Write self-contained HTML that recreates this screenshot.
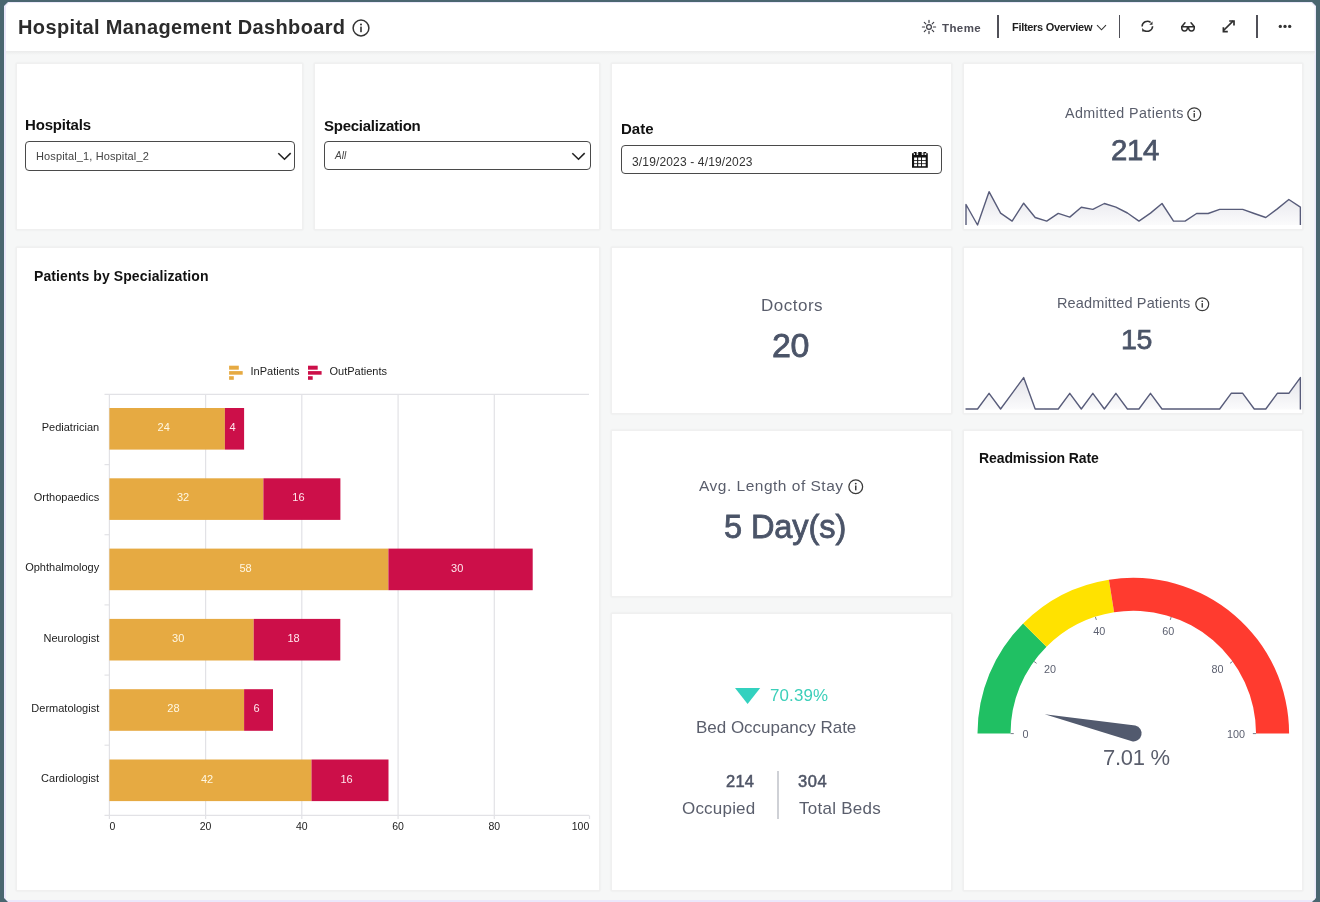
<!DOCTYPE html>
<html><head><meta charset="utf-8">
<style>
*{box-sizing:border-box;margin:0;padding:0}
html,body{width:1320px;height:902px;overflow:hidden;background:#4a6670;font-family:"Liberation Sans",sans-serif;position:relative}
#win{position:absolute;left:4px;top:2px;width:1312px;height:900px;background:#ebe8fb;clip-path:polygon(4px 0,calc(100% - 4px) 0,100% 4px,100% calc(100% - 4px),calc(100% - 4px) 100%,4px 100%,0 calc(100% - 4px),0 4px)}
#bg{position:absolute;left:5.5px;top:3px;width:1309px;height:897px;background:#f6f7f7;clip-path:polygon(3.5px 0,calc(100% - 3.5px) 0,100% 3.5px,100% 100%,0 100%,0 3.5px)}
#hdr{position:absolute;left:5.5px;top:3px;width:1309px;height:48px;background:#fff;clip-path:polygon(3.5px 0,calc(100% - 3.5px) 0,100% 3.5px,100% 100%,0 100%,0 3.5px)}
#hdrline{position:absolute;left:5.5px;top:51px;width:1309px;height:4px;background:linear-gradient(#ebebeb,#f0f1f1 50%,#f6f7f7)}
.card{position:absolute;background:#fff;border:1px solid #f0f0f0;box-shadow:0 0 2px rgba(0,0,0,0.07)}
.t{position:absolute;white-space:nowrap;line-height:1;will-change:transform}
svg{position:absolute;overflow:visible;will-change:transform}
</style></head>
<body>
<div id="win"></div>
<div id="bg"></div>
<div id="hdr"></div>
<div id="hdrline"></div>

<!-- cards -->
<div class="card" style="left:16px;top:63px;width:287px;height:167px"></div>
<div class="card" style="left:314px;top:63px;width:286px;height:167px"></div>
<div class="card" style="left:611px;top:63px;width:341px;height:167px"></div>
<div class="card" style="left:963px;top:63px;width:340px;height:167px"></div>
<div class="card" style="left:16px;top:247px;width:584px;height:644px"></div>
<div class="card" style="left:611px;top:247px;width:341px;height:167px"></div>
<div class="card" style="left:963px;top:247px;width:340px;height:167px"></div>
<div class="card" style="left:611px;top:430px;width:341px;height:167px"></div>
<div class="card" style="left:611px;top:613px;width:341px;height:278px"></div>
<div class="card" style="left:963px;top:430px;width:340px;height:461px"></div>

<!-- header -->
<div class="t" style="left:18px;top:17px;font-size:20px;font-weight:700;color:#2b2b2b;letter-spacing:0.37px">Hospital Management Dashboard</div>
<svg style="left:352px;top:19px" width="18" height="18" viewBox="0 0 18 18"><circle cx="9" cy="9" r="7.9" fill="none" stroke="#333" stroke-width="1.5"/><rect x="8.2" y="7.6" width="1.6" height="5.6" fill="#333"/><circle cx="9" cy="5.4" r="1" fill="#333"/></svg>
<svg style="left:921.5px;top:19.6px" width="14" height="14" viewBox="0 0 14 14"><g stroke="#3d3d45" stroke-width="1.2" fill="none" stroke-linecap="round"><circle cx="7" cy="7" r="2.4"/><path d="M7 0.4V2.6M7 11.4V13.6M0.4 7H2.6M11.4 7H13.6M2.3 2.3L3.8 3.8M10.2 10.2L11.7 11.7M2.3 11.7L3.8 10.2M10.2 3.8L11.7 2.3"/></g></svg>
<div class="t" style="left:942px;top:22.8px;font-size:11.5px;font-weight:700;color:#4d4d57;letter-spacing:0.4px">Theme</div>
<div style="position:absolute;left:997px;top:15px;width:1.6px;height:22.6px;background:#505058"></div>
<div class="t" style="left:1011.5px;top:21.6px;font-size:11px;font-weight:700;color:#1e1e1e;letter-spacing:-0.3px">Filters Overview</div>
<svg style="left:1096px;top:24px" width="11" height="7" viewBox="0 0 11 7"><path d="M1 1.2L5.5 5.8L10 1.2" fill="none" stroke="#333" stroke-width="1.1"/></svg>
<div style="position:absolute;left:1118.6px;top:15px;width:1.8px;height:22.6px;background:#505058"></div>
<svg style="left:1138px;top:17px" width="20" height="18" viewBox="0 0 20 18"><g fill="none" stroke="#2e2e2e" stroke-width="1.5"><path d="M4.1 9.4A5.3 5.3 0 0 1 12.6 5.3"/><path d="M14.6 9.2A5.3 5.3 0 0 1 6.2 13.3"/></g><path d="M11.3 7.7H14.5V4.4Z" fill="#2e2e2e"/><path d="M4.2 11.1V14.4H7.5Z" fill="#2e2e2e"/></svg>
<svg style="left:1180px;top:20.5px" width="16" height="12" viewBox="0 0 16 12"><g fill="none" stroke="#2e2e2e" stroke-width="1.5" stroke-linejoin="round" stroke-linecap="round"><path d="M1.7 5.8H7.5C7.5 8.6 6.1 10.1 4.5 10.1C2.7 10.1 1.5 8.7 1.7 5.8Z"/><path d="M14.3 5.8H8.5C8.5 8.6 9.9 10.1 11.5 10.1C13.3 10.1 14.5 8.7 14.3 5.8Z"/><path d="M1.8 5.6L5 1.8M14.2 5.6L11 1.8"/></g></svg>
<svg style="left:1219px;top:17px" width="20" height="18" viewBox="0 0 20 18"><g fill="none" stroke="#2e2e2e" stroke-width="1.7"><path d="M4.5 13.5L14.2 3.8"/><path d="M10.2 4H15V8.4"/><path d="M4.4 10.2V14.6H8.8"/></g></svg>
<div style="position:absolute;left:1256px;top:15px;width:1.8px;height:22.8px;background:#505058"></div>
<svg style="left:1278px;top:24px" width="14" height="5" viewBox="0 0 14 5"><g fill="#333"><circle cx="2.3" cy="2.4" r="1.65"/><circle cx="7" cy="2.4" r="1.65"/><circle cx="11.7" cy="2.4" r="1.65"/></g></svg>


<!-- filters -->
<div class="t" style="left:24.8px;top:117.3px;font-size:15px;font-weight:700;color:#111;letter-spacing:-0.18px">Hospitals</div>
<div style="position:absolute;left:25px;top:141px;width:270px;height:29.5px;border:1.2px solid #4a4a4a;border-radius:4px;background:#fff"></div>
<div class="t" style="left:35.5px;top:151px;font-size:11px;color:#444;letter-spacing:0.13px">Hospital_1, Hospital_2</div>
<svg style="left:277px;top:152px" width="15" height="9" viewBox="0 0 15 9"><path d="M1.3 1.2L7.5 7.2L13.7 1.1" fill="none" stroke="#222" stroke-width="1.6"/></svg>

<div class="t" style="left:324px;top:117.5px;font-size:15px;font-weight:700;color:#111;letter-spacing:-0.25px">Specialization</div>
<div style="position:absolute;left:324.3px;top:141px;width:266.5px;height:29px;border:1.2px solid #4a4a4a;border-radius:4px;background:#fff"></div>
<div class="t" style="left:334.5px;top:151px;font-size:10px;font-style:italic;color:#444">All</div>
<svg style="left:571px;top:152px" width="15" height="9" viewBox="0 0 15 9"><path d="M1.3 1.2L7.5 7.2L13.7 1.1" fill="none" stroke="#222" stroke-width="1.6"/></svg>

<div class="t" style="left:621px;top:120.6px;font-size:15px;font-weight:700;color:#111;letter-spacing:0px">Date</div>
<div style="position:absolute;left:621px;top:144.8px;width:321.3px;height:29.6px;border:1.2px solid #4a4a4a;border-radius:4px;background:#fff"></div>
<div class="t" style="left:631.5px;top:155.5px;font-size:12px;color:#333;letter-spacing:0.15px">3/19/2023 - 4/19/2023</div>
<svg style="left:912px;top:152px" width="16" height="16" viewBox="0 0 16 16"><path d="M0 1.3H1.8V0H4.6V1.3H6.2V0H9.7V1.3H11.4V0H14.2V1.3H15.8V15.7H0Z" fill="#111"/><g fill="#fff"><rect x="2.1" y="5.5" width="3" height="2.5"/><rect x="6.2" y="5.5" width="2.9" height="2.5"/><rect x="10" y="5.5" width="3.7" height="2.5"/><rect x="2.1" y="8.8" width="3" height="2.5"/><rect x="6.2" y="8.8" width="2.9" height="2.5"/><rect x="10" y="8.8" width="3.7" height="2.5"/><rect x="2.1" y="12.1" width="3" height="2.1"/><rect x="6.2" y="12.1" width="2.9" height="2.1"/><rect x="10" y="12.1" width="3.7" height="2.1"/><rect x="1.8" y="1.3" width="1.2" height="1.6"/><rect x="4.6" y="1.3" width="1.6" height="1.6"/><rect x="9.7" y="1.3" width="1.7" height="1.6"/><rect x="12.6" y="1.3" width="1.6" height="1.6"/></g></svg>

<!-- KPIs -->
<div class="t" style="left:1065px;top:106.2px;font-size:14.3px;color:#5a5e6c;letter-spacing:0.4px">Admitted Patients</div>
<svg style="left:1187.45px;top:107.15px" width="14.5" height="14.5" viewBox="0 0 16 16"><circle cx="8" cy="8" r="7.1" fill="none" stroke="#3a3a3a" stroke-width="1.3"/><rect x="7.25" y="6.7" width="1.5" height="5" fill="#3a3a3a"/><circle cx="8" cy="4.7" r="0.95" fill="#3a3a3a"/></svg>
<div class="t" style="left:1110.8px;top:135.2px;font-size:29.3px;font-weight:400;color:#4b5468;letter-spacing:-0.3px;-webkit-text-stroke:0.75px #4b5468">214</div>

<div class="t" style="left:1057.3px;top:296.2px;font-size:14.5px;color:#5a5e6c;letter-spacing:0.15px">Readmitted Patients</div>
<svg style="left:1195.25px;top:296.55px" width="14.5" height="14.5" viewBox="0 0 16 16"><circle cx="8" cy="8" r="7.1" fill="none" stroke="#3a3a3a" stroke-width="1.3"/><rect x="7.25" y="6.7" width="1.5" height="5" fill="#3a3a3a"/><circle cx="8" cy="4.7" r="0.95" fill="#3a3a3a"/></svg>
<div class="t" style="left:1121px;top:325.07px;font-size:28.5px;font-weight:400;color:#4b5468;letter-spacing:-0.3px;-webkit-text-stroke:0.75px #4b5468">15</div>

<div class="t" style="left:760.5px;top:297.3px;font-size:17px;color:#5a5e6c;letter-spacing:0.5px">Doctors</div>
<div class="t" style="left:772px;top:328.22px;font-size:34px;font-weight:400;color:#4b5468;letter-spacing:-0.5px;-webkit-text-stroke:0.8px #4b5468">20</div>

<div class="t" style="left:699.4px;top:478.18px;font-size:15.5px;color:#5a5e6c;letter-spacing:0.5px">Avg. Length of Stay</div>
<svg style="left:848.45px;top:479.05px" width="15.5" height="15.5" viewBox="0 0 16 16"><circle cx="8" cy="8" r="7.1" fill="none" stroke="#3a3a3a" stroke-width="1.3"/><rect x="7.25" y="6.7" width="1.5" height="5" fill="#3a3a3a"/><circle cx="8" cy="4.7" r="0.95" fill="#3a3a3a"/></svg>
<div class="t" style="left:724px;top:510.8px;font-size:32.6px;font-weight:400;color:#4b5468;letter-spacing:-0.12px;-webkit-text-stroke:0.8px #4b5468">5 Day(s)</div>

<svg style="left:735px;top:688px" width="25.2" height="16" viewBox="0 0 25.2 16"><path d="M0 0H25.2L12.6 15.9Z" fill="#33d1bf"/></svg>
<div class="t" style="left:770px;top:688.4px;font-size:16.9px;color:#3ccfb9;letter-spacing:0.15px">70.39%</div>
<div class="t" style="left:696.2px;top:718.91px;font-size:17px;color:#5a5e6c;letter-spacing:-0.02px">Bed Occupancy Rate</div>
<div class="t" style="left:725.5px;top:772.53px;font-size:16.5px;font-weight:400;color:#4f5566;letter-spacing:0.2px;-webkit-text-stroke:0.5px #4f5566">214</div>
<div class="t" style="left:682px;top:799.91px;font-size:17px;color:#5a5e6c;letter-spacing:0.2px">Occupied</div>
<div style="position:absolute;left:777px;top:770.6px;width:1.6px;height:48.5px;background:#cfd1d6"></div>
<div class="t" style="left:798.3px;top:772.53px;font-size:16.5px;font-weight:400;color:#4f5566;letter-spacing:0.6px;-webkit-text-stroke:0.5px #4f5566">304</div>
<div class="t" style="left:798.6px;top:799.91px;font-size:17px;color:#5a5e6c;letter-spacing:0.25px">Total Beds</div>

<!-- bar chart -->
<div class="t" style="left:33.8px;top:268.85px;font-size:14px;font-weight:700;color:#111;letter-spacing:0.1px">Patients by Specialization</div>
<svg style="left:0;top:0" width="1320" height="902" viewBox="0 0 1320 902" font-family="Liberation Sans">
<g stroke="#e2e2e6" stroke-width="1.2" fill="none"><path d="M205.6 394.4V819"/><path d="M301.8 394.4V819"/><path d="M398.1 394.4V819"/><path d="M494.3 394.4V819"/><path d="M104.5 394.4H589"/><path d="M104.5 815.4H589"/><path d="M109.4 394.4V819"/><path d="M589.5 815.4V819"/><path d="M104.5 464.6H109.4"/><path d="M104.5 534.7H109.4"/><path d="M104.5 604.9H109.4"/><path d="M104.5 675.1H109.4"/><path d="M104.5 745.2H109.4"/></g>
<rect x="109.4" y="408.0" width="115.5" height="41.6" fill="#e6aa42"/>
<rect x="224.9" y="408.0" width="19.2" height="41.6" fill="#cc0f49"/>
<text x="99.2" y="430.8" font-size="11" fill="#1c1c1c" text-anchor="end">Pediatrician</text>
<text x="163.7" y="431.0" font-size="11" fill="#fff7e2" text-anchor="middle">24</text>
<text x="232.5" y="431.0" font-size="11" fill="#ffe8ee" text-anchor="middle">4</text>
<rect x="109.4" y="478.3" width="154.0" height="41.6" fill="#e6aa42"/>
<rect x="263.4" y="478.3" width="77.0" height="41.6" fill="#cc0f49"/>
<text x="99.2" y="501.1" font-size="11" fill="#1c1c1c" text-anchor="end">Orthopaedics</text>
<text x="183.0" y="501.3" font-size="11" fill="#fff7e2" text-anchor="middle">32</text>
<text x="298.4" y="501.3" font-size="11" fill="#ffe8ee" text-anchor="middle">16</text>
<rect x="109.4" y="548.6" width="279.0" height="41.6" fill="#e6aa42"/>
<rect x="388.4" y="548.6" width="144.3" height="41.6" fill="#cc0f49"/>
<text x="99.2" y="571.4" font-size="11" fill="#1c1c1c" text-anchor="end">Ophthalmology</text>
<text x="245.5" y="571.6" font-size="11" fill="#fff7e2" text-anchor="middle">58</text>
<text x="457.2" y="571.6" font-size="11" fill="#ffe8ee" text-anchor="middle">30</text>
<rect x="109.4" y="618.9" width="144.3" height="41.6" fill="#e6aa42"/>
<rect x="253.7" y="618.9" width="86.6" height="41.6" fill="#cc0f49"/>
<text x="99.2" y="641.7" font-size="11" fill="#1c1c1c" text-anchor="end">Neurologist</text>
<text x="178.2" y="641.9" font-size="11" fill="#fff7e2" text-anchor="middle">30</text>
<text x="293.6" y="641.9" font-size="11" fill="#ffe8ee" text-anchor="middle">18</text>
<rect x="109.4" y="689.2" width="134.7" height="41.6" fill="#e6aa42"/>
<rect x="244.1" y="689.2" width="28.9" height="41.6" fill="#cc0f49"/>
<text x="99.2" y="712.0" font-size="11" fill="#1c1c1c" text-anchor="end">Dermatologist</text>
<text x="173.4" y="712.2" font-size="11" fill="#fff7e2" text-anchor="middle">28</text>
<text x="256.5" y="712.2" font-size="11" fill="#ffe8ee" text-anchor="middle">6</text>
<rect x="109.4" y="759.5" width="202.1" height="41.6" fill="#e6aa42"/>
<rect x="311.5" y="759.5" width="77.0" height="41.6" fill="#cc0f49"/>
<text x="99.2" y="782.3" font-size="11" fill="#1c1c1c" text-anchor="end">Cardiologist</text>
<text x="207.0" y="782.5" font-size="11" fill="#fff7e2" text-anchor="middle">42</text>
<text x="346.6" y="782.5" font-size="11" fill="#ffe8ee" text-anchor="middle">16</text>
<text x="109.4" y="830" font-size="10.5" fill="#1c1c1c" text-anchor="start">0</text>
<text x="205.6" y="830" font-size="10.5" fill="#1c1c1c" text-anchor="middle">20</text>
<text x="301.8" y="830" font-size="10.5" fill="#1c1c1c" text-anchor="middle">40</text>
<text x="398.1" y="830" font-size="10.5" fill="#1c1c1c" text-anchor="middle">60</text>
<text x="494.3" y="830" font-size="10.5" fill="#1c1c1c" text-anchor="middle">80</text>
<text x="589.3" y="830" font-size="10.5" fill="#1c1c1c" text-anchor="end">100</text>
<g fill="#e6aa42"><rect x="229.1" y="365.7" width="9.7" height="4"/><rect x="229.1" y="371.1" width="13.6" height="3.6"/><rect x="229.1" y="376.2" width="4.7" height="3.6"/></g>
<text x="250.5" y="374.7" font-size="11" fill="#1c1c1c">InPatients</text>
<g fill="#cc0f49"><rect x="308" y="365.7" width="9.7" height="4"/><rect x="308" y="371.1" width="13.6" height="3.6"/><rect x="308" y="376.2" width="4.7" height="3.6"/></g>
<text x="329.5" y="374.7" font-size="11" fill="#1c1c1c">OutPatients</text>
</svg>

<!-- gauge -->
<div class="t" style="left:978.6px;top:450.65px;font-size:14px;font-weight:700;color:#111;letter-spacing:-0.1px">Readmission Rate</div>
<svg style="left:0;top:0" width="1320" height="902" viewBox="0 0 1320 902" font-family="Liberation Sans">
<path d="M977.50 733.60A155.8 155.8 0 0 1 1023.13 623.43L1046.50 646.80A122.75 122.75 0 0 0 1010.55 733.60Z" fill="#20c063"/>
<path d="M1023.13 623.43A155.8 155.8 0 0 1 1108.93 579.72L1114.10 612.36A122.75 122.75 0 0 0 1046.50 646.80Z" fill="#ffe200"/>
<path d="M1108.93 579.72A155.8 155.8 0 0 1 1289.10 733.60L1256.05 733.60A122.75 122.75 0 0 0 1114.10 612.36Z" fill="#ff3b2f"/>
<g stroke="#7a7d88" stroke-width="1"><path d="M1010.55 733.60L1013.75 733.60"/><path d="M1033.99 661.45L1036.58 663.33"/><path d="M1095.37 616.86L1096.36 619.90"/><path d="M1171.23 616.86L1170.24 619.90"/><path d="M1232.61 661.45L1230.02 663.33"/><path d="M1256.05 733.60L1252.85 733.60"/></g>
<text x="1025.6" y="737.7" font-size="10.8" fill="#5c6070" text-anchor="middle">0</text>
<text x="1050" y="672.7" font-size="10.8" fill="#5c6070" text-anchor="middle">20</text>
<text x="1099.35" y="634.8" font-size="10.8" fill="#5c6070" text-anchor="middle">40</text>
<text x="1168.35" y="634.8" font-size="10.8" fill="#5c6070" text-anchor="middle">60</text>
<text x="1217.5" y="672.7" font-size="10.8" fill="#5c6070" text-anchor="middle">80</text>
<text x="1236" y="737.9" font-size="10.8" fill="#5c6070" text-anchor="middle">100</text>
<path d="M1044.7 714.2L1135.29 725.58A8 8 0 1 1 1131.91 741.22Z" fill="#525a6e"/>
</svg>
<div class="t" style="left:1102.6px;top:747.2px;font-size:22px;color:#5a5e6c;letter-spacing:-0.3px">7.01 %</div>

<!-- sparklines -->
<svg style="left:0;top:0" width="1320" height="902" viewBox="0 0 1320 902"><defs><linearGradient id="sg" x1="0" y1="0" x2="0" y2="1"><stop offset="0" stop-color="#e4e4ea"/><stop offset="1" stop-color="#fbfbfc"/></linearGradient></defs><path d="M966.00 225L966.00 204.50 L977.53 225.00 L989.06 191.70 L1000.59 213.10 L1012.12 221.10 L1023.65 203.20 L1035.18 217.50 L1046.71 221.10 L1058.24 213.40 L1069.77 217.10 L1081.30 207.20 L1092.83 209.40 L1104.36 203.50 L1115.89 207.20 L1127.42 213.00 L1138.95 221.10 L1150.48 213.10 L1162.01 203.50 L1173.54 221.10 L1185.07 221.10 L1196.60 213.50 L1208.13 213.50 L1219.66 209.40 L1231.19 209.40 L1242.72 209.40 L1254.25 213.50 L1265.78 217.50 L1277.31 208.90 L1288.84 199.50 L1300.37 207.20 L1300.37 225Z" fill="url(#sg)"/><path d="M966.00 225L966.00 204.50 L977.53 225.00 L989.06 191.70 L1000.59 213.10 L1012.12 221.10 L1023.65 203.20 L1035.18 217.50 L1046.71 221.10 L1058.24 213.40 L1069.77 217.10 L1081.30 207.20 L1092.83 209.40 L1104.36 203.50 L1115.89 207.20 L1127.42 213.00 L1138.95 221.10 L1150.48 213.10 L1162.01 203.50 L1173.54 221.10 L1185.07 221.10 L1196.60 213.50 L1208.13 213.50 L1219.66 209.40 L1231.19 209.40 L1242.72 209.40 L1254.25 213.50 L1265.78 217.50 L1277.31 208.90 L1288.84 199.50 L1300.37 207.20 L1300.37 225" fill="none" stroke="#585c7a" stroke-width="1.4" stroke-linejoin="round"/><path d="M966.00 409.5L966.00 409.00 L977.53 409.00 L989.06 393.30 L1000.59 409.00 L1012.12 393.30 L1023.65 377.60 L1035.18 409.00 L1046.71 409.00 L1058.24 409.00 L1069.77 393.30 L1081.30 409.00 L1092.83 393.30 L1104.36 409.00 L1115.89 393.30 L1127.42 409.00 L1138.95 409.00 L1150.48 393.30 L1162.01 409.00 L1173.54 409.00 L1185.07 409.00 L1196.60 409.00 L1208.13 409.00 L1219.66 409.00 L1231.19 393.30 L1242.72 393.30 L1254.25 409.00 L1265.78 409.00 L1277.31 393.30 L1288.84 393.30 L1300.37 377.60 L1300.37 409.5Z" fill="url(#sg)"/><path d="M966.00 409.5L966.00 409.00 L977.53 409.00 L989.06 393.30 L1000.59 409.00 L1012.12 393.30 L1023.65 377.60 L1035.18 409.00 L1046.71 409.00 L1058.24 409.00 L1069.77 393.30 L1081.30 409.00 L1092.83 393.30 L1104.36 409.00 L1115.89 393.30 L1127.42 409.00 L1138.95 409.00 L1150.48 393.30 L1162.01 409.00 L1173.54 409.00 L1185.07 409.00 L1196.60 409.00 L1208.13 409.00 L1219.66 409.00 L1231.19 393.30 L1242.72 393.30 L1254.25 409.00 L1265.78 409.00 L1277.31 393.30 L1288.84 393.30 L1300.37 377.60 L1300.37 409.5" fill="none" stroke="#585c7a" stroke-width="1.4" stroke-linejoin="round"/></svg>
</body></html>
